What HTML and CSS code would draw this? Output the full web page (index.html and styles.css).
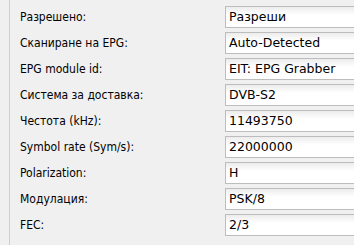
FILE: index.html
```html
<!DOCTYPE html>
<html lang="bg">
<head>
    <meta charset="UTF-8">
    <title>Настройки на мукс</title>
    <link rel="stylesheet" href="styles.css">
</head>
<body>
    <div class="panel">
        <div class="form">
            <label>Разрешено:</label>
            <div class="field">Разреши</div>

            <label>Сканиране на EPG:</label>
            <div class="field">Auto-Detected</div>

            <label>EPG module id:</label>
            <div class="field">EIT: EPG Grabber</div>

            <label>Система за доставка:</label>
            <div class="field">DVB-S2</div>

            <label>Честота (kHz):</label>
            <div class="field">11493750</div>

            <label>Symbol rate (Sym/s):</label>
            <div class="field">22000000</div>

            <label>Polarization:</label>
            <div class="field">H</div>

            <label>Модулация:</label>
            <div class="field">PSK/8</div>

            <label>FEC:</label>
            <div class="field">2/3</div>
        </div>
    </div>
</body>
</html>
```

FILE: styles.css
```css
body {
    margin: 0;
    background: #f0f0f0;
    font-family: "DejaVu Sans Condensed", "DejaVu Sans", sans-serif;
    font-stretch: condensed;
    font-size: 12px;
    color: #000;
}

.panel {
    margin-left: 9px;
    border-left: 1px solid #cfcfcf;
    min-height: 245px;
    box-sizing: border-box;
    padding: 6px 0 0 10px;
}

/* two columns: label + value box */
.form {
    display: grid;
    grid-template-columns: 205px 1fr;
    row-gap: 4px;
    align-items: center;
}

.form label {
    line-height: 22px;
}

.field {
    height: 22px;
    line-height: 20px;
    box-sizing: border-box;
    border: 1px solid #bdbdbd;
    border-right: none;
    padding-left: 3px;
    background: linear-gradient(#ececec, #ffffff 8px);
    font-family: "DejaVu Sans", sans-serif;
    font-stretch: normal;
    font-size: 12.5px;
    white-space: nowrap;
}
```
